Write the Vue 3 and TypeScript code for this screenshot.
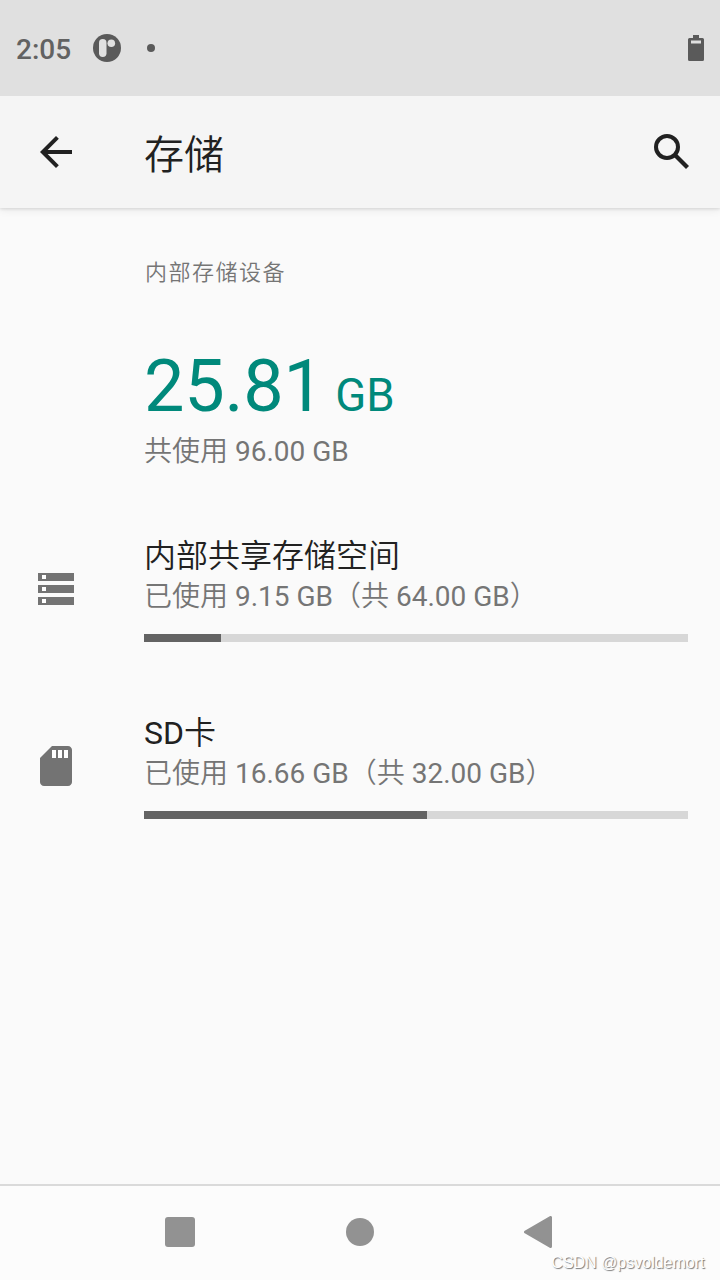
<script setup lang="ts">
interface Volume {
  id: string
  name: string
  summary: string
  fill: number
}

const volumes: Volume[] = [
  { id: 'internal', name: '内部共享存储空间', summary: '已使用 9.15 GB（共 64.00 GB）', fill: 77 / 544 },
  { id: 'sd', name: 'SD卡', summary: '已使用 16.66 GB（共 32.00 GB）', fill: 283 / 544 },
]
</script>

<template>
  <div class="screen">
    <header class="status">
      <span class="clock">2:05</span>
      <svg class="notif" width="28" height="28" viewBox="0 0 28 28">
        <circle cx="14" cy="14" r="14" fill="#5a5a5a" />
        <rect x="6" y="5" width="7.500" height="18" rx="3.700" fill="#e0e0e0" />
        <circle cx="18.300" cy="9.300" r="3.800" fill="#e0e0e0" />
      </svg>
      <span class="dot"></span>
      <svg class="battery" width="16" height="26" viewBox="0 0 16 26">
        <path d="M5 0h6v3h3.5A1.500 1.500 0 0 1 16 4.500v20a1.500 1.500 0 0 1-1.500 1.500h-13A1.500 1.500 0 0 1 0 24.500v-20A1.500 1.500 0 0 1 1.500 3H5z" fill="#5a5a5a" />
        <rect x="3" y="5.500" width="10" height="3" fill="#e0e0e0" />
      </svg>
    </header>

    <nav class="toolbar">
      <svg class="back" width="48" height="48" viewBox="0 0 24 24">
        <path fill="#212121" d="M20 11H7.830l5.590-5.590L12 4l-8 8 8 8 1.410-1.410L7.830 13H20v-2z" />
      </svg>
      <h1>存储</h1>
      <svg class="search" width="48" height="48" viewBox="0 0 24 24">
        <circle cx="9.500" cy="9.500" r="5.500" fill="none" stroke="#212121" stroke-width="2" />
        <path fill="none" stroke="#212121" stroke-width="2.100" d="M13.500 13.500L19.750 19.750" />
      </svg>
    </nav>

    <main class="content">
      <h2>内部存储设备</h2>
      <div class="total"><span class="value">25.81</span><span class="unit"> GB</span></div>
      <p class="total-sub">共使用 96.00 GB</p>

      <section v-for="v in volumes" :key="v.id" class="volume">
        <div class="icon">
          <svg v-if="v.id === 'internal'" width="48" height="48" viewBox="0 0 24 24">
            <path fill="#737373" d="M3 4h18v4H3zM3 10h18v4H3zM3 16h18v4H3z" />
            <path fill="#fff" d="M5 5h2v2H5zM5 11h2v2H5zM5 17h2v2H5z" />
          </svg>
          <svg v-else width="48" height="48" viewBox="0 0 24 24">
            <path fill="#737373" d="M18 2h-8L4 8v12c0 1.100.9 2 2 2h12c1.100 0 2-.9 2-2V4c0-1.100-.9-2-2-2z" />
            <path fill="#fff" d="M10 4h2v4h-2zM13 4h2v4h-2zM16 4h2v4h-2z" />
          </svg>
        </div>
        <div class="info">
          <h3>{{ v.name }}</h3>
          <p>{{ v.summary }}</p>
          <div class="bar"><div class="fill" :style="{ width: v.fill * 100 + '%' }"></div></div>
        </div>
      </section>
    </main>

    <footer class="navbar">
      <svg width="30" height="30" viewBox="0 0 30 30"><rect width="30" height="30" rx="3" fill="#929292" /></svg>
      <svg width="28" height="28" viewBox="0 0 28 28"><circle cx="14" cy="14" r="14" fill="#929292" /></svg>
      <svg width="28" height="32" viewBox="0 0 28 32">
        <path d="M1.500 16L26.500 1.500v29z" fill="#929292" stroke="#929292" stroke-width="3" stroke-linejoin="round" />
      </svg>
      <span class="watermark">CSDN @psvoldemort</span>
    </footer>
  </div>
</template>

<style>
body {
  margin: 0;
  overflow: hidden;
}
</style>

<style scoped>
.screen {
  width: 720px;
  height: 1280px;
  display: flex;
  flex-direction: column;
  background: #fafafa;
  font-family: Roboto, "Noto Sans CJK SC DemiLight", "Noto Sans CJK SC Light", "Noto Sans CJK SC", sans-serif;
  color: #212121;
}
h1, h2, h3, p {
  margin: 0;
  font-weight: 390;
  white-space: nowrap;
}
svg {
  display: block;
  flex: none;
}
.status {
  position: relative;
  z-index: 1;
  box-sizing: border-box;
  height: 96px;
  flex: none;
  padding: 0 16px;
  display: flex;
  align-items: center;
  background: #e0e0e0;
  color: #5a5a5a;
}
.clock {
  width: 77px;
  font-size: 28px;
  font-weight: 500;
  line-height: 34px;
  padding-top: 3px;
  color: #626262;
}
.dot {
  width: 8px;
  height: 8px;
  margin-left: 26px;
  border-radius: 50%;
  background: #5a5a5a;
}
.battery {
  margin-left: auto;
}
.toolbar {
  box-sizing: border-box;
  height: 112px;
  flex: none;
  padding: 0 24px 0 32px;
  display: flex;
  align-items: center;
  background: #f5f5f5;
  box-shadow: 0 1px 3px rgba(0, 0, 0, 0.12), 0 3px 8px rgba(0, 0, 0, 0.06);
}
h1 {
  flex: 1;
  margin-left: 64px;
  padding-top: 8px;
  font-size: 40px;
  line-height: 56px;
}
.content {
  flex: 1;
  padding: 49px 32px 0 0;
}
h2 {
  margin-left: 145px;
  font-size: 22px;
  line-height: 32px;
  letter-spacing: 1.500px;
  color: #757575;
}
.total {
  margin: 56px 0 0 144px;
  height: 84px;
  line-height: 84px;
  white-space: pre;
  color: #00897b;
}
.value {
  font-size: 72px;
  letter-spacing: -0.2px;
}
.unit {
  font-size: 45.500px;
}
.total-sub {
  margin-left: 144px;
  font-size: 28px;
  line-height: 40px;
  margin-top: 3px;
  color: #757575;
}
.volume {
  display: flex;
  height: 113px;
  margin-top: 64px;
}
.total-sub + .volume {
  margin-top: 62px;
}
.icon {
  width: 144px;
  padding: 31px 0 0 32px;
  box-sizing: border-box;
}
.info {
  flex: 1;
}
h3 {
  font-size: 32px;
  line-height: 44px;
}
.info p {
  margin-top: -1px;
  font-size: 28px;
  line-height: 40px;
  color: #757575;
}
.bar {
  height: 8px;
  margin-top: 17px;
  background: #d7d7d7;
}
.fill {
  height: 8px;
  background: #636363;
}
.navbar {
  position: relative;
  box-sizing: border-box;
  height: 96px;
  flex: none;
  display: flex;
  justify-content: space-between;
  align-items: center;
  padding: 0 168px 2px 165px;
  border-top: 2px solid #dadada;
  background: #fcfcfc;
}
.watermark {
  position: absolute;
  right: 15.500px;
  bottom: 7px;
  font-family: "Liberation Sans", sans-serif;
  font-size: 16px;
  line-height: 20px;
  color: #fff;
  text-shadow: 1px 1px 1px #777;
}
</style>
